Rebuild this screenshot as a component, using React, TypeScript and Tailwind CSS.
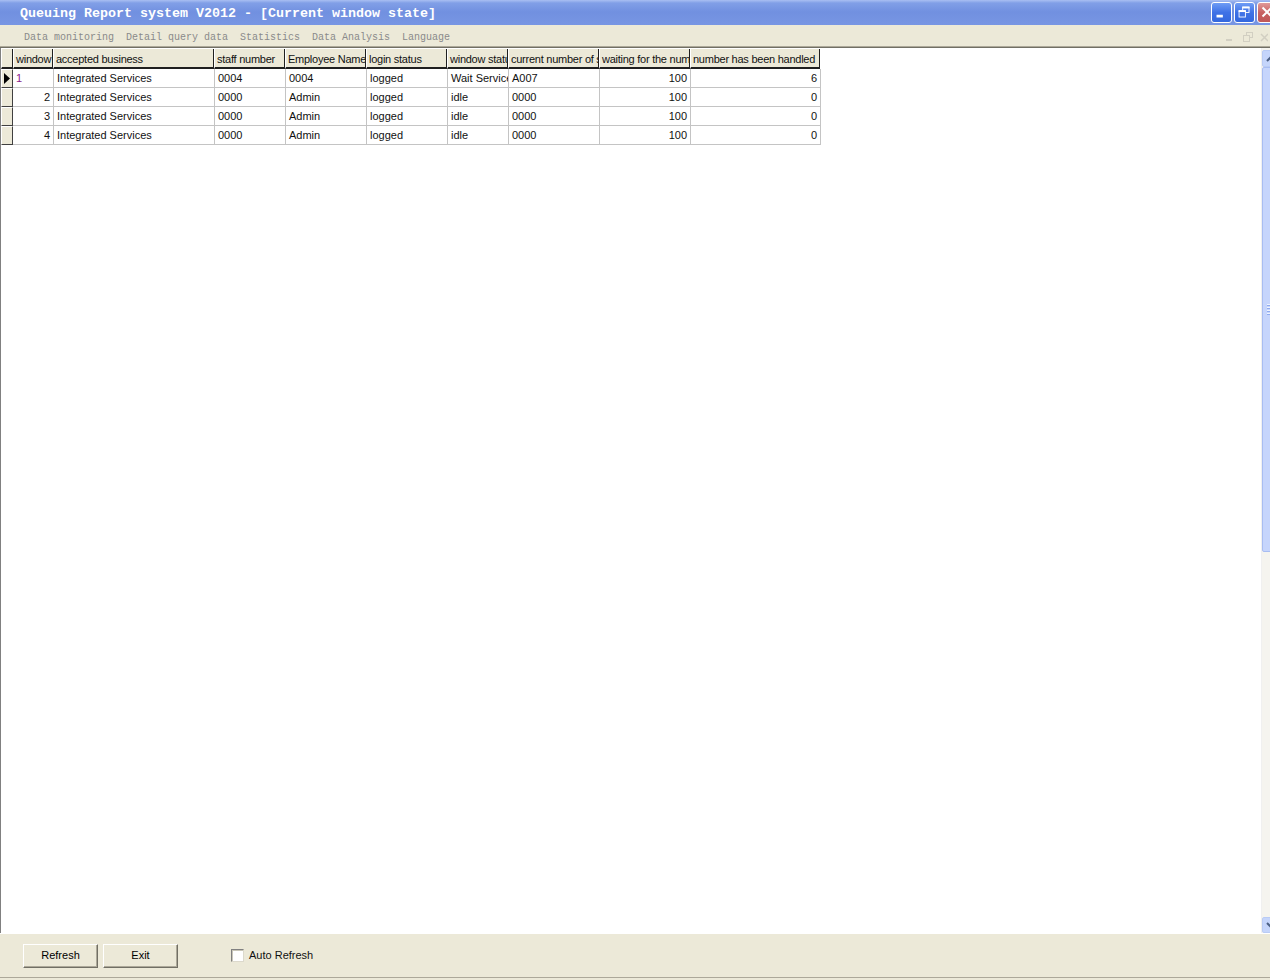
import React from "react";

type Row = {
  win: string;
  business: string;
  staff: string;
  name: string;
  login: string;
  status: string;
  current: string;
  waiting: string;
  handled: string;
};

const rows: Row[] = [
  { win: "1", business: "Integrated Services", staff: "0004", name: "0004", login: "logged", status: "Wait Service", current: "A007", waiting: "100", handled: "6" },
  { win: "2", business: "Integrated Services", staff: "0000", name: "Admin", login: "logged", status: "idle", current: "0000", waiting: "100", handled: "0" },
  { win: "3", business: "Integrated Services", staff: "0000", name: "Admin", login: "logged", status: "idle", current: "0000", waiting: "100", handled: "0" },
  { win: "4", business: "Integrated Services", staff: "0000", name: "Admin", login: "logged", status: "idle", current: "0000", waiting: "100", handled: "0" },
];

const menus = ["Data monitoring", "Detail query data", "Statistics", "Data Analysis", "Language"];

function TitleButton({ kind }: { kind: "min" | "restore" | "close" }) {
  const bg =
    kind === "close"
      ? "bg-[linear-gradient(to_bottom,#e09a9a,#c86262_50%,#c05858)]"
      : "bg-[linear-gradient(to_bottom,#6f9cf5,#3f72e6_50%,#3468de)]";
  return (
    <div className={`w-[21px] h-[21px] rounded-[3px] border border-white flex items-center justify-center ${bg}`}>
      {kind === "min" && (
        <svg width="21" height="21" viewBox="0 0 21 21">
          <rect x="5" y="13" width="7" height="3" fill="#fff" />
        </svg>
      )}
      {kind === "restore" && (
        <svg width="21" height="21" viewBox="0 0 21 21">
          <rect x="8.5" y="4.5" width="7" height="6" fill="none" stroke="#fff" />
          <rect x="8" y="4" width="8" height="2" fill="#fff" />
          <rect x="4.5" y="8.5" width="7" height="7" fill="#3f72e6" stroke="#fff" />
          <rect x="4" y="8" width="8" height="2" fill="#fff" />
        </svg>
      )}
      {kind === "close" && (
        <svg width="21" height="21" viewBox="0 0 21 21">
          <path d="M5 5 L15 15 M15 5 L5 15" stroke="#fff" strokeWidth="2.2" />
        </svg>
      )}
    </div>
  );
}

function HeaderCell({ w, children }: { w: string; children?: React.ReactNode }) {
  return (
    <div
      className={`${w} h-full shrink-0 overflow-hidden whitespace-nowrap bg-[#ece9d8] border-r border-b-2 border-r-[#1f1f1f] border-b-[#1f1f1f] border-l border-l-white pl-[2px] pt-[2px] leading-[16px] tracking-[-0.25px]`}
    >
      {children}
    </div>
  );
}

function Cell({ w, right, className, children }: { w: string; right?: boolean; className?: string; children: React.ReactNode }) {
  return (
    <div
      className={`${w} h-full shrink-0 overflow-hidden whitespace-nowrap border-r border-b border-[#c4c4c4] leading-[18px] ${
        right ? "text-right pr-[3px]" : "pl-[3px]"
      } ${className ?? ""}`}
    >
      {children}
    </div>
  );
}

export default function App() {
  return (
    <div className="w-[1270px] h-[980px] overflow-hidden bg-[#ece9d8] flex flex-col font-['Liberation_Sans',Arial,sans-serif] text-[11px] text-[#111]">
      {/* title bar */}
      <div className="h-[25px] shrink-0 flex items-center overflow-hidden bg-[linear-gradient(to_bottom,#a9bff2_0px,#819fe7_3px,#7190e0_12px,#7896e3_25px)]">
        <span className="pl-[20px] pt-[2px] font-['Liberation_Mono',monospace] font-bold text-[13.33px] text-white whitespace-pre">
          Queuing Report system V2012 - [Current window state]
        </span>
        <div className="ml-auto mr-[-8px] flex gap-[2px]">
          <TitleButton kind="min" />
          <TitleButton kind="restore" />
          <TitleButton kind="close" />
        </div>
      </div>

      {/* menu bar */}
      <div className="h-[21px] shrink-0 flex items-center pt-[3px] pl-[18px] font-['Liberation_Mono',monospace] text-[10px] text-[#8a8a8a]">
        {menus.map((m) => (
          <span key={m} className="px-[6px] whitespace-pre">
            {m}
          </span>
        ))}
        <div className="ml-auto flex items-center gap-[6px] pr-[2px]">
          <svg width="12" height="12" viewBox="0 0 12 12">
            <rect x="2" y="8" width="6" height="2" fill="#d2cfc2" />
          </svg>
          <svg width="12" height="12" viewBox="0 0 12 12">
            <rect x="4.5" y="1.5" width="6" height="5" fill="none" stroke="#d2cfc2" />
            <rect x="1.5" y="4.5" width="6" height="6" fill="#ece9d8" stroke="#d2cfc2" />
          </svg>
          <svg width="8" height="12" viewBox="0 0 8 12">
            <path d="M1 3 L8 10 M8 3 L1 10" stroke="#d2cfc2" strokeWidth="1.5" />
          </svg>
        </div>
      </div>

      {/* client area */}
      <div className="h-[2px] shrink-0 border-t border-t-[#aca899] border-b border-b-[#716f64]" />
      <div className="flex-1 flex min-h-0 bg-white border-l border-l-[#808080]">
        <div className="flex-1 flex flex-col pt-[1px]">
          <div className="h-[20px] flex">
            <HeaderCell w="w-[12px]" />
            <HeaderCell w="w-[40px]">window number</HeaderCell>
            <HeaderCell w="w-[161px]">accepted business</HeaderCell>
            <HeaderCell w="w-[71px]">staff number</HeaderCell>
            <HeaderCell w="w-[81px]">Employee Name</HeaderCell>
            <HeaderCell w="w-[81px]">login status</HeaderCell>
            <HeaderCell w="w-[61px]">window status</HeaderCell>
            <HeaderCell w="w-[91px]">current number of service</HeaderCell>
            <HeaderCell w="w-[91px]">waiting for the number</HeaderCell>
            <HeaderCell w="w-[130px]">number has been handled</HeaderCell>
          </div>
          {rows.map((r, i) => (
            <div key={r.win} className="h-[19px] flex">
              <div className="w-[12px] h-full shrink-0 bg-[#ece9d8] border-t border-l border-white border-r border-b border-r-[#404040] border-b-[#404040] flex items-center justify-center">
                {i === 0 && (
                  <svg width="6" height="11" viewBox="0 0 6 11">
                    <path d="M0 0 L6 5.5 L0 11 Z" fill="#000" />
                  </svg>
                )}
              </div>
              {i === 0 ? (
                <Cell w="w-[41px]" className="text-[#8a1a8a]">{r.win}</Cell>
              ) : (
                <Cell w="w-[41px]" right>{r.win}</Cell>
              )}
              <Cell w="w-[161px]">{r.business}</Cell>
              <Cell w="w-[71px]">{r.staff}</Cell>
              <Cell w="w-[81px]">{r.name}</Cell>
              <Cell w="w-[81px]">{r.login}</Cell>
              <Cell w="w-[61px]">{r.status}</Cell>
              <Cell w="w-[91px]">{r.current}</Cell>
              <Cell w="w-[91px]" right>{r.waiting}</Cell>
              <Cell w="w-[130px]" right>{r.handled}</Cell>
            </div>
          ))}
        </div>

        {/* vertical scrollbar, only the left part is visible */}
        <div className="w-[9px] shrink-0 overflow-hidden border-l border-l-[#f0f0f0]">
          <div className="w-[17px] h-full flex flex-col bg-[#f5f4ef]">
            <div className="h-[17px] shrink-0 mt-[2px] rounded-[2px] border border-[#b9cbf5] bg-[#c5d5fb] flex items-center justify-center">
              <svg width="9" height="6" viewBox="0 0 9 6">
                <path d="M1 5 L4.5 1.5 L8 5" fill="none" stroke="#4d6185" strokeWidth="2" />
              </svg>
            </div>
            <div className="h-[485px] shrink-0 rounded-[2px] border border-[#a8bdf2] bg-[#c6d5fc] flex flex-col items-center justify-center gap-[1px]">
              {[0, 1, 2, 3].map((k) => (
                <div key={k} className="w-[8px] h-[2px] border-t border-t-[#eef3fe] border-b border-b-[#8eaaf0]" />
              ))}
            </div>
            <div className="flex-1" />
            <div className="h-[16px] shrink-0 rounded-[2px] border border-[#b9cbf5] bg-[#c5d5fb] flex items-center justify-center">
              <svg width="9" height="6" viewBox="0 0 9 6">
                <path d="M1 1 L4.5 4.5 L8 1" fill="none" stroke="#4d6185" strokeWidth="2" />
              </svg>
            </div>
          </div>
        </div>
      </div>

      {/* bottom panel */}
      <div className="h-[44px] shrink-0 flex items-center pl-[23px] border-t border-t-white">
        <button className="w-[75px] h-[24px] bg-[#ece9d8] border border-t-white border-l-white border-r-[#716f64] border-b-[#716f64] shadow-[inset_-1px_-1px_0_#aca899] text-[11px] text-black">
          Refresh
        </button>
        <button className="ml-[5px] w-[75px] h-[24px] bg-[#ece9d8] border border-t-white border-l-white border-r-[#716f64] border-b-[#716f64] shadow-[inset_-1px_-1px_0_#aca899] text-[11px] text-black">
          Exit
        </button>
        <label className="ml-[53px] flex items-center gap-[5px]">
          <span className="w-[13px] h-[13px] bg-white border border-t-[#808080] border-l-[#808080] border-r-[#dcd9cc] border-b-[#dcd9cc] shadow-[inset_1px_1px_0_#c9c6b8]" />
          <span>Auto Refresh</span>
        </label>
      </div>
      <div className="h-[1px] shrink-0 bg-[#aca899]" />
      <div className="h-[2px] shrink-0" />
    </div>
  );
}
